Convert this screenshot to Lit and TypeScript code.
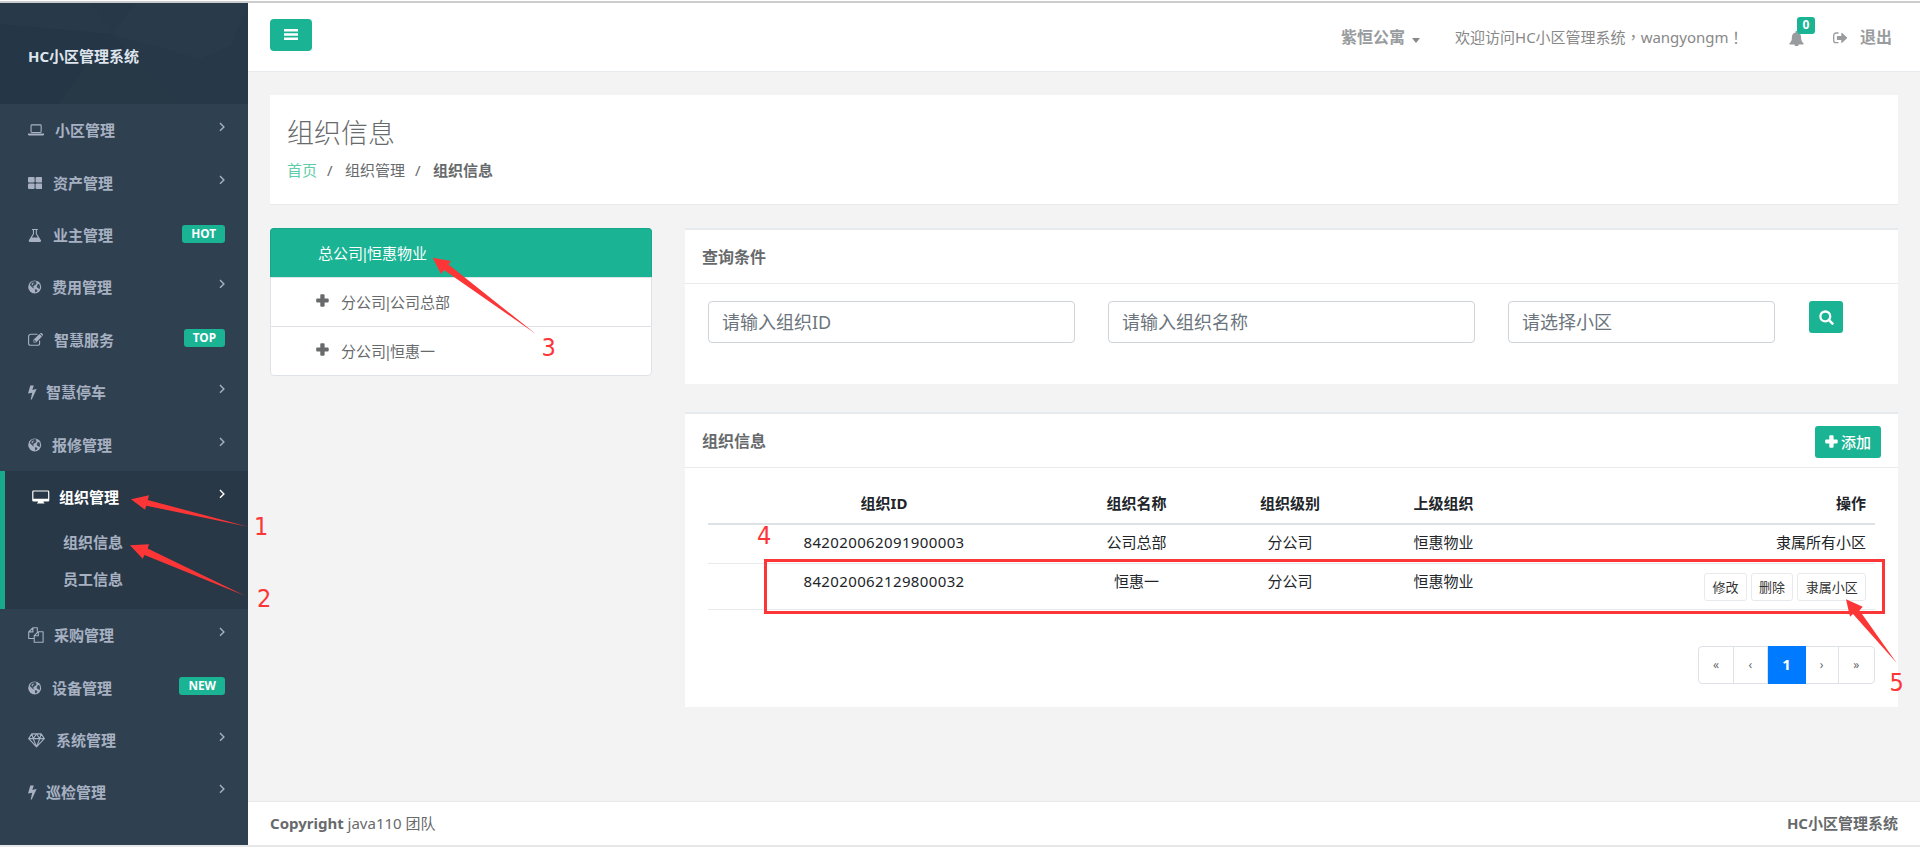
import { LitElement, html, svg, css, nothing } from "lit";
import { customElement } from "lit/decorators.js";
import { classMap } from "lit/directives/class-map.js";

interface Glyph {
  w: number;
  h: number;
  body: unknown;
}

const GLYPHS: Record<string, Glyph> = {
  laptop: {
    w: 16,
    h: 12,
    body: svg`<path fill-rule="evenodd" d="M3.9 0.3h8.4a1.4 1.4 0 0 1 1.4 1.4v5.9a1.4 1.4 0 0 1-1.4 1.4H3.9a1.4 1.4 0 0 1-1.4-1.4V1.7A1.4 1.4 0 0 1 3.9.3zM3.9 1.4a.3.3 0 0 0-.3.3v5.9c0 .2.1.3.3.3h8.4c.2 0 .3-.1.3-.3V1.7a.3.3 0 0 0-.3-.3zM0 9.6h16v.9c0 .6-.7 1-1.4 1H1.4C.7 11.5 0 11.1 0 10.500z"/>`,
  },
  large: {
    w: 14,
    h: 12,
    body: svg`<rect width="6.600" height="5.600" rx="1"/><rect x="7.600" width="6.600" height="5.600" rx="1"/><rect y="6.500" width="6.600" height="5.500" rx="1"/><rect x="7.600" y="6.500" width="6.600" height="5.500" rx="1"/>`,
  },
  flask: {
    w: 14,
    h: 13,
    body: svg`<path fill-rule="evenodd" d="M4 0h5.800v1.100h-.9v3.700l3.900 6.200c.7 1.100.2 2-1 2H2C.8 13 .3 12.100 1 11l3.900-6.200V1.100H4zM6 1.100v4L3.900 8.400h6L7.800 5.100v-4z"/>`,
  },
  globe: {
    w: 14,
    h: 14,
    body: svg`<circle cx="6.700" cy="6.900" r="6.500"/><path fill="#2f4050" d="M4.600 1.500L7.200 1.100 8.600 1.900 7.900 3 8.900 3.500 7.600 4.800 6.500 5.200 5.800 6.400 4.700 6.500 5.300 7.600 6.300 7.800 5.900 8.600 4.200 7.600 2.700 5.800 1.700 5.300 2.700 3zM9.700 4.300L11.100 3.800 12.100 6.300 11.700 8.900 10.600 8.600 9.300 7.700 8.600 6.400zM6.900 9.300L8.700 9.500 9.500 10.400 8.600 11.800 7.400 12.500 7 11.200z" opacity=".9"/><path d="M3.300 4.200L5.200 2.500 5.800 3.300 4.700 4.500 4.900 5.400z"/>`,
  },
  edit: {
    w: 16,
    h: 13,
    body: svg`<path d="M11.600 7.600v2.600a2.100 2.100 0 0 1-2.100 2.100H2.700A2.100 2.100 0 0 1 .600 10.200V3.400a2.100 2.100 0 0 1 2.100-2.100h6.800" fill="none" stroke="currentColor" stroke-width="1.100"/><path fill-rule="evenodd" d="M5.500 6.800l5.900-5.900 2.600 2.600-5.900 5.900H5.500zM6.700 7.100l-.500.500v1.200h1.300l.500-.500zM12 .400l.400-.300c.4-.3.9-.3 1.200 0l1.200 1.200c.300.300.300.800 0 1.200l-.300.400z"/>`,
  },
  bolt: {
    w: 9,
    h: 15,
    body: svg`<path d="M2.300.500h3.500L4.300 4.900l3.800-.9c.2 0 .4.200.3.400L3.800 14.500H2.700L4.200 7.700.400 8.600c-.2 0-.4-.1-.3-.4z"/>`,
  },
  desktop: {
    w: 18,
    h: 14,
    body: svg`<path fill-rule="evenodd" d="M1.500.500h14.500a1.300 1.300 0 0 1 1.300 1.300v8.400a1.300 1.300 0 0 1-1.300 1.300h-4.500l.300 1.300c.600.200.8.300.8.700H4.900c0-.4.200-.5.800-.7l.3-1.300H1.500A1.300 1.300 0 0 1 .2 10.200V1.800A1.300 1.300 0 0 1 1.500.5zM1.700 1.600a.3.3 0 0 0-.3.3v6.800h14.700V1.900a.3.3 0 0 0-.3-.3z"/>`,
  },
  files: {
    w: 16,
    h: 16,
    body: svg`<g fill="none" stroke="currentColor" stroke-width="1.100" stroke-linejoin="round"><path d="M6 11.500H.700V5L4.800.800h4.500v4M4.900.900v4H.800"/><path d="M10.200 4.700h4.900v10.500H6.200V8.700z M10.300 4.800v4H6.300"/></g>`,
  },
  diamond: {
    w: 17,
    h: 15,
    body: svg`<path fill="none" stroke="currentColor" stroke-width="1.100" stroke-linejoin="round" d="M3.800.900h9.400l3.100 4.700L8.500 13.900.700 5.600zM.700 5.600h15.600M5.200 5.600l3.300 8.100 3.300-8.100M3.900 1l1.300 4.600L8.500 1l3.300 4.600L13.100 1"/>`,
  },
  chevron: {
    w: 6,
    h: 10,
    body: svg`<path d="M1 1l3.900 3.900L1 8.800" fill="none" stroke="currentColor" stroke-width="1.400"/>`,
  },
  bars: {
    w: 14,
    h: 12,
    body: svg`<path d="M0 0h14v2.600H0zM0 4.200h14v2.600H0zM0 8.400h14v2.600H0z"/>`,
  },
  bell: {
    w: 15,
    h: 15,
    body: svg`<path d="M7.500 0c.6 0 1 .4 1 1v.5c2.200.4 3.600 2.200 3.600 4.500 0 3.300.8 5 2.600 6.500 0 .6-.5 1-1.100 1H9.500a2 2 0 0 1-4 0H1.400c-.6 0-1.100-.4-1.100-1C2.100 11 2.900 9.300 2.900 6c0-2.300 1.400-4.100 3.600-4.500V1c0-.6.4-1 1-1z"/>`,
  },
  signout: {
    w: 15,
    h: 12,
    body: svg`<path d="M5.500 1H3a2.300 2.300 0 0 0-2.300 2.300v5.100A2.300 2.300 0 0 0 3 10.700h2.500" fill="none" stroke="currentColor" stroke-width="1.300"/><path d="M4.400 3.900h3.900V1.300c0-.5.500-.7.900-.4l4.800 4.600c.2.200.2.500 0 .7L9.200 10.800c-.4.400-.9.100-.9-.4V7.900H4.400c-.300 0-.5-.2-.5-.5V4.400c0-.3.200-.5.500-.5z"/>`,
  },
  plus: {
    w: 13,
    h: 13,
    body: svg`<path d="M5.200.200h2.500c.5 0 .9.400.9.900v3.300h3.200c.5 0 .9.400.9.900v2.300c0 .5-.4.900-.9.900H8.600v3.300c0 .5-.4.900-.9.900H5.200c-.5 0-.9-.4-.9-.9V8.500H1.100c-.5 0-.9-.4-.9-.9V5.300c0-.5.4-.9.900-.9h3.200V1.100c0-.5.400-.9.900-.9z"/>`,
  },
  search: {
    w: 15,
    h: 15,
    body: svg`<circle cx="6.300" cy="6.400" r="4.900" fill="none" stroke="currentColor" stroke-width="2.300"/><path d="M9.800 9.900l3.700 3.700" stroke="currentColor" stroke-width="2.600" stroke-linecap="round"/>`,
  },
};

const icon = (name: string) => {
  const g = GLYPHS[name];
  return html`<svg class="icon" width=${g.w} height=${g.h} viewBox="0 0 ${g.w} ${g.h}" fill="currentColor">${g.body}</svg>`;
};

interface MenuItem {
  icon: string;
  label: string;
  gap: number;
  badge?: string;
  children?: string[];
}

const MENU: MenuItem[] = [
  { icon: "laptop", label: "小区管理", gap: 11 },
  { icon: "large", label: "资产管理", gap: 11 },
  { icon: "flask", label: "业主管理", gap: 11, badge: "HOT" },
  { icon: "globe", label: "费用管理", gap: 10 },
  { icon: "edit", label: "智慧服务", gap: 10, badge: "TOP" },
  { icon: "bolt", label: "智慧停车", gap: 9 },
  { icon: "globe", label: "报修管理", gap: 10 },
  { icon: "desktop", label: "组织管理", gap: 9, children: ["组织信息", "员工信息"] },
  { icon: "files", label: "采购管理", gap: 10 },
  { icon: "globe", label: "设备管理", gap: 10, badge: "NEW" },
  { icon: "diamond", label: "系统管理", gap: 11 },
  { icon: "bolt", label: "巡检管理", gap: 9 },
];

@customElement("app-root")
export class AppRoot extends LitElement {
  static styles = css`
    :host {
      display: block;
      position: relative;
      box-sizing: border-box;
      width: 1920px;
      height: 849px;
      overflow: hidden;
      background: #fff;
      font: 15px/22px "Noto Sans", "Noto Sans CJK SC", sans-serif;
      color: #676a6c;
    }
    * {
      box-sizing: border-box;
    }
    .icon {
      display: block;
      flex: none;
    }
    .shell {
      display: grid;
      grid-template-columns: 248px 1fr;
      height: 846px;
      margin-top: 1px;
      border-top: 2px solid #ccc;
      border-bottom: 2px solid #e7e7e7;
    }
    .side {
      background: #2f4050;
      color: #a7b1c2;
      font-weight: 700;
    }
    .brand {
      position: relative;
      height: 101px;
      background: #273948;
    }
    .brand svg {
      position: absolute;
      inset: 0;
    }
    .brand span {
      position: relative;
      display: block;
      padding: 42px 0 0 28px;
      color: #dfe4ed;
    }
    .item {
      display: flex;
      align-items: center;
      height: 52.43px;
      padding: 0 23px 0 28px;
    }
    .label {
      flex: 1;
    }
    .chev {
      padding: 0 0 6px;
    }
    .badge {
      height: 18px;
      margin-bottom: 3px;
      padding: 0 9px;
      border-radius: 3px;
      background: #1ab394;
      color: #fff;
      font-size: 11.800px;
      line-height: 17px;
    }
    .group {
      height: 138px;
      border-left: 5px solid #19aa8d;
      background: #293846;
    }
    .group .item {
      padding-left: 27px;
      color: #fff;
    }
    .sub {
      height: 37px;
      padding-left: 58px;
      line-height: 38px;
    }
    .main {
      display: flex;
      flex-direction: column;
      background: #f3f3f4;
    }
    .top {
      display: flex;
      align-items: flex-start;
      height: 69px;
      padding-left: 22px;
      background: #fff;
      border-bottom: 1px solid #e7eaec;
      color: #999c9e;
    }
    .burger {
      display: flex;
      align-items: center;
      justify-content: center;
      width: 42px;
      height: 32px;
      margin-top: 16px;
      border-radius: 4px;
      background: #1ab394;
      color: #fff;
    }
    .estate {
      display: flex;
      align-items: center;
      margin: 23px 0 0 1029px;
      font-weight: 700;
      font-size: 16px;
    }
    .caret {
      margin: 6px 0 0 7px;
      border: 4.500px solid transparent;
      border-top: 5px solid #888;
      border-bottom: 0;
    }
    .welcome {
      width: 334px;
      margin: 23px 0 0 35px;
      color: #888;
      white-space: nowrap;
    }
    .mark {
      font-family: "Noto Sans CJK TC", sans-serif;
    }
    .bell {
      position: relative;
      margin-top: 28px;
    }
    .count {
      position: absolute;
      left: 8px;
      top: -14px;
      width: 18px;
      height: 17px;
      border-radius: 3px;
      background: #1ab394;
      color: #fff;
      font: 700 12px/15px "Noto Sans", sans-serif;
      text-align: center;
    }
    .exit {
      display: flex;
      align-items: center;
      gap: 12px;
      margin: 23px 0 0 29px;
      font-weight: 700;
      font-size: 16px;
    }
    .exit .icon {
      margin-top: 1px;
    }
    .heading {
      height: 110px;
      margin: 23px 22px 0;
      padding: 20px 17px 0;
      background: #fff;
      border-bottom: 1px solid #e7eaec;
    }
    .heading h2 {
      margin: 0;
      font-size: 27px;
      line-height: 36px;
      font-weight: 300;
    }
    .crumbs {
      display: flex;
      margin-top: 8px;
      gap: 10px;
    }
    .crumbs a {
      color: #60cda9;
    }
    .crumbs .sep {
      width: 8px;
    }
    .content {
      display: grid;
      grid-template-columns: 382px 1213px;
      column-gap: 33px;
      align-items: start;
      padding: 23px 22px 0;
      flex: 1;
    }
    .node {
      display: flex;
      align-items: center;
      gap: 12px;
      height: 49px;
      padding: 0 0 0 45px;
      background: #fff;
      border: 1px solid #dee2e6;
      border-bottom: 0;
    }
    .node .icon {
      margin-bottom: 3px;
    }
    .node span {
      padding-bottom: 1px;
    }
    .node i {
      margin: 0 -2.200px;
      font-style: normal;
    }
    .node:last-child {
      height: 50px;
      border-bottom: 1px solid #dee2e6;
      border-radius: 0 0 4px 4px;
    }
    .node.active {
      padding-left: 47px;
      background: #1ab394;
      border-color: #18a589;
      border-radius: 4px 4px 0 0;
      color: #fff;
    }
    .panel {
      border-top: 2px solid #e7eaec;
      background: #fff;
    }
    .query {
      height: 156px;
      margin-bottom: 28px;
    }
    .orgs {
      height: 295px;
    }
    .panel-head {
      display: flex;
      justify-content: space-between;
      height: 54px;
      padding: 12px 17px 0;
      border-bottom: 1px solid #e7eaec;
      font-weight: 700;
      font-size: 16px;
      line-height: 30px;
    }
    .filters {
      display: flex;
      align-items: flex-start;
      padding: 17px 23px 0;
    }
    .field {
      width: 367px;
      height: 42px;
      margin-right: 33px;
      padding: 0 13px;
      border: 1px solid #ced4da;
      border-radius: 4px;
      font-size: 18px;
      line-height: 41px;
      color: #6c757d;
    }
    .field.short {
      width: 267px;
      margin-right: 34px;
    }
    .go {
      display: flex;
      align-items: center;
      justify-content: center;
      width: 34px;
      height: 32px;
      border-radius: 3px;
      background: #1ab394;
      color: #fff;
    }
    .add {
      display: flex;
      align-items: center;
      gap: 3px;
      width: 66px;
      height: 32px;
      padding-left: 10px;
      border-radius: 3px;
      background: #1ab394;
      color: #fff;
      font-size: 15px;
      font-weight: 500;
    }
    .add .icon {
      margin-bottom: 2px;
    }
    table {
      width: 1167px;
      margin: 17px 0 0 23px;
      border-collapse: separate;
      border-spacing: 0;
      table-layout: fixed;
      color: #212529;
      text-align: center;
    }
    th,
    td {
      padding: 0;
      vertical-align: top;
    }
    th {
      height: 40px;
      padding-top: 7px;
      border-bottom: 2px solid #dee2e6;
    }
    td {
      height: 39px;
      padding-top: 6px;
      border-bottom: 1px solid #e7eaec;
    }
    .tall td {
      height: 46px;
    }
    .num {
      letter-spacing: 0.37px;
    }
    th.ops,
    td.ops {
      padding-right: 9px;
      text-align: right;
    }
    .buttons {
      display: flex;
      justify-content: flex-end;
      gap: 4px;
      margin-top: 3px;
    }
    .mini {
      height: 28px;
      padding: 0 7.300px;
      border: 1px solid #e7eaec;
      border-radius: 3px;
      font-size: 13px;
      line-height: 26px;
      color: #333;
    }
    .pager {
      display: flex;
      width: 177px;
      height: 38px;
      margin: 36px 0 0 1013px;
      border: 1px solid #dee2e6;
      border-radius: 4px;
      font-size: 12px;
      line-height: 35px;
      text-align: center;
    }
    .page {
      flex: 1 1 34px;
      border-right: 1px solid #dee2e6;
    }
    .page:last-child,
    .page.now {
      border: 0;
    }
    .page.wide {
      flex-basis: 36px;
    }
    .page.now {
      flex: 0 0 38px;
      margin: -1px 0;
      background: #007bff;
      color: #fff;
      font-weight: 700;
      font-size: 15px;
      line-height: 36px;
    }
    .foot {
      display: flex;
      justify-content: space-between;
      height: 44px;
      padding: 10px 22px 0;
      border-top: 1px solid #e7eaec;
      background: #fff;
    }
    .notes {
      position: absolute;
      left: 0;
      top: 0;
      fill: #fc3636;
      font: 25px "DejaVu Sans Condensed", "DejaVu Sans", sans-serif;
    }
  `;

  private renderItem(item: MenuItem) {
    const row = html`<div class="item">
      ${icon(item.icon)}
      <span class="label" style="margin-left:${item.gap}px">${item.label}</span>
      ${item.badge ? html`<span class="badge">${item.badge}</span>` : html`<span class="chev">${icon("chevron")}</span>`}
    </div>`;
    return item.children
      ? html`<div class="group">${row}${item.children.map((c) => html`<div class="sub">${c}</div>`)}</div>`
      : row;
  }

  private renderNode(kind: string, name: string, active = false) {
    return html`<div class=${classMap({ node: true, active })}>
      ${active ? nothing : icon("plus")}<span>${kind}<i>|</i>${name}</span>
    </div>`;
  }

  render() {
    return html`
      <div class="shell">
        <nav class="side">
          <div class="brand">
            <svg width="248" height="101">
              <path fill="#253646" d="M0 21L112 31 176 101H0z" />
              <path fill="#293b4a" d="M112 31L136 0H248L232 42 200 56z" />
              <path fill="#283a49" d="M0 21L112 31 92 0H0z" />
              <path fill="#273847" d="M88 60L58 101H176L140 60z" />
            </svg>
            <span>HC小区管理系统</span>
          </div>
          ${MENU.map((m) => this.renderItem(m))}
        </nav>
        <div class="main">
          <header class="top">
            <div class="burger">${icon("bars")}</div>
            <div class="estate">紫恒公寓<span class="caret"></span></div>
            <div class="welcome">欢迎访问HC小区管理系统<span class="mark">，</span>wangyongm<span class="mark">！</span></div>
            <div class="bell">${icon("bell")}<span class="count">0</span></div>
            <div class="exit">${icon("signout")}<span>退出</span></div>
          </header>
          <section class="heading">
            <h2>组织信息</h2>
            <div class="crumbs">
              <a>首页</a><span class="sep">/</span><span>组织管理</span><span class="sep">/</span><b>组织信息</b>
            </div>
          </section>
          <div class="content">
            <div class="tree">
              ${this.renderNode("总公司", "恒惠物业", true)}
              ${this.renderNode("分公司", "公司总部")}
              ${this.renderNode("分公司", "恒惠一")}
            </div>
            <div>
              <section class="panel query">
                <div class="panel-head">查询条件</div>
                <div class="filters">
                  <div class="field">请输入组织ID</div>
                  <div class="field">请输入组织名称</div>
                  <div class="field short">请选择小区</div>
                  <div class="go">${icon("search")}</div>
                </div>
              </section>
              <section class="panel orgs">
                <div class="panel-head">
                  <span>组织信息</span>
                  <div class="add">${icon("plus")}<span>添加</span></div>
                </div>
                <table>
                  <colgroup>
                    <col width="352" />
                    <col width="153" />
                    <col width="154" />
                    <col width="153" />
                    <col width="355" />
                  </colgroup>
                  <tr>
                    <th>组织ID</th>
                    <th>组织名称</th>
                    <th>组织级别</th>
                    <th>上级组织</th>
                    <th class="ops">操作</th>
                  </tr>
                  <tr>
                    <td class="num">842020062091900003</td>
                    <td>公司总部</td>
                    <td>分公司</td>
                    <td>恒惠物业</td>
                    <td class="ops">隶属所有小区</td>
                  </tr>
                  <tr class="tall">
                    <td class="num">842020062129800032</td>
                    <td>恒惠一</td>
                    <td>分公司</td>
                    <td>恒惠物业</td>
                    <td class="ops">
                      <div class="buttons">
                        <span class="mini">修改</span><span class="mini">删除</span><span class="mini">隶属小区</span>
                      </div>
                    </td>
                  </tr>
                </table>
                <div class="pager">
                  <span class="page wide">«</span><span class="page">‹</span><span class="page now">1</span
                  ><span class="page">›</span><span class="page wide">»</span>
                </div>
              </section>
            </div>
          </div>
          <footer class="foot">
            <span><b>Copyright</b> java110 团队</span>
            <b>HC小区管理系统</b>
          </footer>
        </div>
      </div>
      <svg class="notes" width="1920" height="849">
        <rect x="765.500" y="560.500" width="1118" height="52" fill="none" stroke="#fc3636" stroke-width="3" />
        <path d="M131 499.300L149 495.300 147.700 500 248 526.700 146.300 505.700 145 509.700z" />
        <path d="M130 545.300L149 544.300 147.700 548.500 245 595.700 144.500 555 142.700 558.700z" />
        <path d="M432.700 257.700L451 261 448.500 264.500 535.800 334 444 270 441 274z" />
        <path d="M1846 599.300L1862.700 606.700 1859.500 610.500 1896.700 663 1853 614 1850 616.700z" />
        <text x="254" y="534.500">1</text>
        <text x="257" y="606.500">2</text>
        <text x="541.500" y="355.500">3</text>
        <text x="757" y="543.500">4</text>
        <text x="1889.500" y="690.500">5</text>
      </svg>
    `;
  }
}
